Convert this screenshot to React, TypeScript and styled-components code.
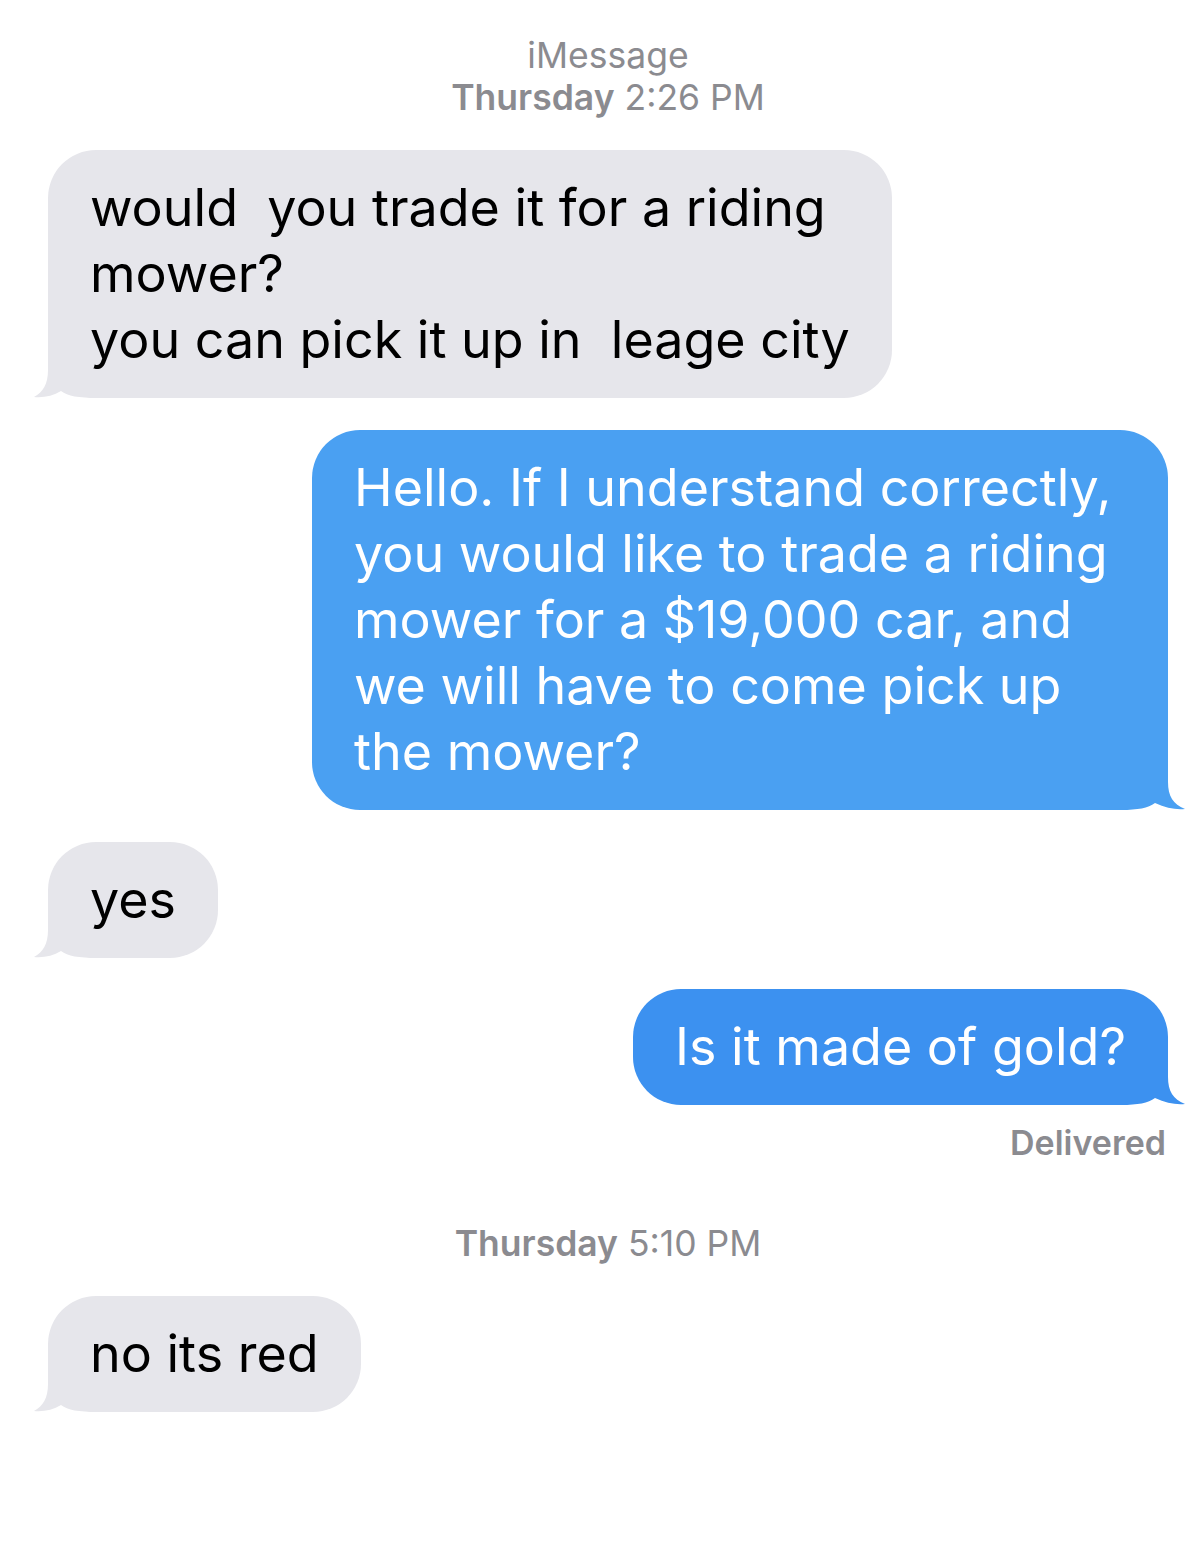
import styled, { createGlobalStyle } from 'styled-components';

const GlobalStyle = createGlobalStyle`
	html, body {
		margin: 0;
		padding: 0;
		background: #ffffff;
	}
	body {
		font-family: Inter, "Noto Sans", "Liberation Sans", sans-serif;
		-webkit-font-smoothing: antialiased;
	}
`;

const GRAY = '#e6e6eb';
const BLUE_TOP = '#4aa0f2';
const BLUE_LOW = '#3c91f0';

const Thread = styled.main`
	width: 1200px;
	min-height: 1563px;
	box-sizing: border-box;
	padding: 35px 32px 0 48px;
	display: flex;
	flex-direction: column;
`;

const Stamp = styled.div<{ $gap?: number }>`
	align-self: center;
	margin-top: ${({ $gap }) => $gap ?? 0}px;
	text-align: center;
	font-size: 35.5px;
	line-height: 42px;
	color: #8b8b90;
`;

const Strong = styled.span`
	font-weight: 600;
`;

const Bubble = styled.div<{ $mine?: boolean; $gap: number; $width?: number; $color: string }>`
	position: relative;
	align-self: ${({ $mine }) => ($mine ? 'flex-end' : 'flex-start')};
	margin-top: ${({ $gap }) => $gap}px;
	width: ${({ $width }) => ($width ? `${$width}px` : 'auto')};
	box-sizing: border-box;
	padding: 25px 42px;
	border-radius: 48px;
	background: ${({ $color }) => $color};
	color: ${({ $mine }) => ($mine ? '#ffffff' : '#000000')};
	font-size: 52px;
	line-height: 66px;
	white-space: pre;
`;

const Words = styled.span`
	position: relative;
`;

const Tail = styled.svg<{ $mine?: boolean }>`
	position: absolute;
	bottom: 0;
	width: 64px;
	height: 50px;
	${({ $mine }) => ($mine ? 'right: -17px; transform: scaleX(-1);' : 'left: -14px;')}
`;

const Receipt = styled.div`
	align-self: flex-end;
	margin-top: 18px;
	margin-right: 2px;
	font-size: 34px;
	line-height: 40px;
	font-weight: 600;
	color: #8b8b90;
`;

function BubbleTail({ mine, color, offset }: { mine?: boolean; color: string; offset: number }) {
	const o = offset;
	return (
		<Tail $mine={mine} viewBox="0 0 64 50" aria-hidden>
			<path
				d={`M${o} 0 L${o} 22 C${o} 36 ${o - 5} 44 0 49 C9 50 19 48 ${o + 13} 43 C${o + 20} 48 ${o + 30} 50 64 50 L64 0 Z`}
				fill={color}
			/>
		</Tail>
	);
}

type MessageProps = {
	mine?: boolean;
	gap: number;
	width?: number;
	color?: string;
	children: string;
};

function Message({ mine, gap, width, color, children }: MessageProps) {
	const fill = color ?? (mine ? BLUE_TOP : GRAY);
	return (
		<Bubble $mine={mine} $gap={gap} $width={width} $color={fill}>
			<BubbleTail mine={mine} color={fill} offset={mine ? 17 : 14} />
			<Words>{children}</Words>
		</Bubble>
	);
}

export default function App() {
	return (
		<>
			<GlobalStyle />
			<Thread>
				<Stamp>
					iMessage
					<br />
					<Strong>Thursday</Strong> 2:26 PM
				</Stamp>
				<Message gap={31}>
					{'would  you trade it for a riding\nmower?\nyou can pick it up in  leage city'}
				</Message>
				<Message mine gap={32} width={856}>
					{
						'Hello. If I understand correctly,\nyou would like to trade a riding\nmower for a $19,000 car, and\nwe will have to come pick up\nthe mower?'
					}
				</Message>
				<Message gap={32}>yes</Message>
				<Message mine gap={31} color={BLUE_LOW}>
					Is it made of gold?
				</Message>
				<Receipt>Delivered</Receipt>
				<Stamp $gap={60}>
					<Strong>Thursday</Strong> 5:10 PM
				</Stamp>
				<Message gap={31}>no its red</Message>
			</Thread>
		</>
	);
}
